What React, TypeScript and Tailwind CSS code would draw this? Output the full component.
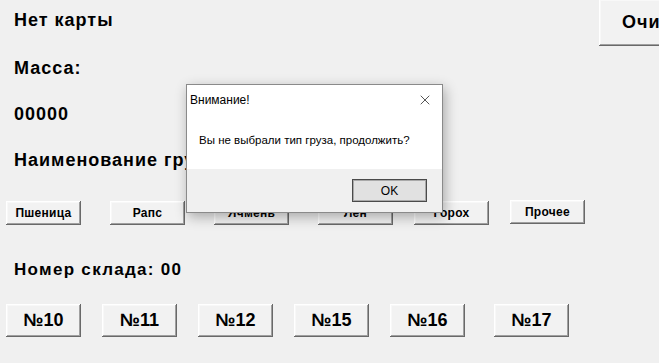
import { X } from "lucide-react";

const cargo = [
  { name: "Пшеница", ml: "ml-0" },
  { name: "Рапс", ml: "ml-[29px]" },
  { name: "Ячмень", ml: "ml-[29px]" },
  { name: "Лен", ml: "ml-[29px]" },
  { name: "Горох", ml: "ml-[21px]" },
  { name: "Прочее", ml: "ml-[21px]" },
];

const stores = [
  { name: "№10", ml: "ml-0" },
  { name: "№11", ml: "ml-[21px]" },
  { name: "№12", ml: "ml-[21px]" },
  { name: "№15", ml: "ml-[21px]" },
  { name: "№16", ml: "ml-[21px]" },
  { name: "№17", ml: "ml-[29px]" },
];

// classic 3D win button edge
const bevel =
  "bg-[#f2f2f2] shadow-[inset_-1px_-1px_#696969,inset_1px_1px_#ffffff,inset_-2px_-2px_#a0a0a0,inset_2px_2px_#f8f8f8]";

function Label({ children, className = "" }: { children: React.ReactNode; className?: string }) {
  return (
    <div className={`text-[18px] leading-[20px] font-bold tracking-[1px] text-black whitespace-nowrap ${className}`}>
      {children}
    </div>
  );
}

export default function App() {
  return (
    <div className="relative w-[659px] h-[363px] overflow-hidden bg-[#f0f0f0] font-['Liberation_Sans',Arial,sans-serif]">
      <div className="flex items-start">
        {/* Left column */}
        <div className="flex-1 flex flex-col pl-[6px]">
          <Label className="mt-[10px] ml-[8px]">Нет карты</Label>
          <Label className="mt-[28px] ml-[8px]">Масса:</Label>
          <Label className="mt-[26px] ml-[8px]">00000</Label>
          <Label className="mt-[26px] ml-[8px]">Наименование груза:</Label>

          <div className="flex items-start mt-[31px]">
            {cargo.map((c, i) => (
              <button
                key={c.name}
                className={`${c.ml} ${bevel} w-[75px] ${i === 5 ? "h-[24px] -mt-[1px]" : "h-[24px]"} text-[12px] font-bold tracking-[0.3px] text-black flex items-center justify-center`}
              >
                {c.name}
              </button>
            ))}
          </div>

          <div className="mt-[35px] ml-[8px] text-[17px] leading-[20px] font-bold tracking-[1.3px] text-black">Номер склада:&nbsp;00</div>

          <div className="flex mt-[24px]">
            {stores.map((s) => (
              <button
                key={s.name}
                className={`${s.ml} ${bevel} w-[75px] h-[33px] text-[18px] font-bold text-black flex items-center justify-center`}
              >
                {s.name}
              </button>
            ))}
          </div>
        </div>

        {/* Right side clear button */}
        <button className={`${bevel} w-[100px] h-[47px] -mt-[1px] mr-[-40px] text-[18px] font-bold tracking-[1px] text-black text-left pl-[23px] whitespace-nowrap`}>
          Очистить
        </button>
      </div>

      {/* Message box */}
      <div className="absolute left-[186px] top-[84px] w-[257px] h-[129px] border border-[#8a8a8a] bg-white shadow-[2px_4px_12px_rgba(0,0,0,0.3)] flex flex-col text-[12px] text-black">
        <div className="h-[28px] flex items-center justify-between pl-[3px] pr-[9px] pt-[1px]">
          <span>Внимание!</span>
          <X className="w-[16px] h-[16px] text-black" strokeWidth={1} />
        </div>
        <div className="flex-1 flex items-center pl-[12px] text-[11.5px]">
          Вы не выбрали тип груза, продолжить?
        </div>
        <div className="h-[43px] bg-[#f0f0f0] flex items-center justify-end pr-[15px]">
          <button className="w-[75px] h-[23px] bg-[#e1e1e1] border border-[#4a4a4a] shadow-[inset_0_0_0_1px_#a9a9a9] text-[12px] text-black">
            OK
          </button>
        </div>
      </div>
    </div>
  );
}
